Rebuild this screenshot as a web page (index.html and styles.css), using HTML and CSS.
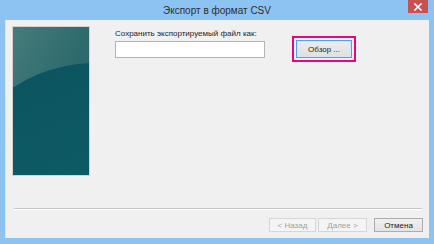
FILE: index.html
```html
<!DOCTYPE html>
<html lang="ru">
<head>
<meta charset="utf-8">
<title>Экспорт в формат CSV</title>
<link rel="stylesheet" href="styles.css">
</head>
<body>
<div class="window">
  <div class="titlebar">
    <span class="title">Экспорт в формат CSV</span>
    <div class="close">
      <svg width="8" height="8" viewBox="0 0 8 8"><path d="M1 1L7 7M7 1L1 7" stroke="#fff" stroke-width="1.6" stroke-linecap="square"/></svg>
    </div>
  </div>
  <div class="client">
    <div class="main">
      <div class="panel">
        <svg width="76" height="148" viewBox="0 0 76 148" preserveAspectRatio="none">
          <defs>
            <linearGradient id="top" x1="0" y1="0" x2="1" y2="1">
              <stop offset="0" stop-color="#467b7b"/>
              <stop offset="0.5" stop-color="#2e6b6d"/>
              <stop offset="1" stop-color="#1f6068"/>
            </linearGradient>
            <linearGradient id="low" x1="0" y1="0" x2="0.4" y2="1">
              <stop offset="0" stop-color="#0b535e"/>
              <stop offset="0.6" stop-color="#0e5c66"/>
              <stop offset="1" stop-color="#196e77"/>
            </linearGradient>
          </defs>
          <rect x="0" y="0" width="76" height="148" fill="url(#top)"/>
          <circle cx="82" cy="186" r="150" fill="url(#low)"/>
        </svg>
      </div>
      <div class="form">
        <div class="label">Сохранить экспортируемый файл как:</div>
        <div class="row">
          <div class="input"></div>
          <div class="btn browse">Обзор ...</div>
        </div>
      </div>
    </div>
    <div class="separator"></div>
    <div class="buttons">
      <div class="btn disabled">&lt; Назад</div>
      <div class="btn disabled next">Далее &gt;</div>
      <div class="btn cancel">Отмена</div>
    </div>
  </div>
</div>
</body>
</html>
```
FILE: styles.css
```css
* { box-sizing: border-box; }
html, body {
  margin: 0;
  padding: 0;
  width: 434px;
  height: 244px;
  overflow: hidden;
}
body {
  background: #8cc3f2;
  font-family: "Liberation Sans", "DejaVu Sans", sans-serif;
}
.window {
  width: 434px;
  height: 244px;
  display: flex;
  flex-direction: column;
}
.titlebar {
  position: relative;
  height: 20px;
  display: flex;
  align-items: center;
  justify-content: center;
}
.title {
  font-size: 10px;
  color: #2e2e2e;
  margin-top: 1px;
}
.close {
  position: absolute;
  top: 0;
  right: 6px;
  width: 20px;
  height: 13px;
  background: #c75050;
  display: flex;
  align-items: center;
  justify-content: center;
}
.client {
  margin: 0 5px 6px 5px;
  height: 218px;
  background: #f0f0f0;
  border-left: 1px solid #d6e6f4;
  display: flex;
  flex-direction: column;
}
.main {
  display: flex;
  padding: 6px 0 0 6px;
  height: 156px;
}
.panel {
  width: 78px;
  height: 150px;
  border: 1px solid #d2d2d2;
  background: #e4e4e4;
}
.panel svg { display: block; }
.form {
  margin-left: 25px;
  padding-top: 2px;
}
.label {
  font-size: 8px;
  line-height: 11px;
  color: #1e1e1e;
  white-space: nowrap;
}
.row {
  display: flex;
  align-items: flex-start;
  margin-top: 2px;
}
.input {
  width: 150px;
  height: 17px;
  background: #fff;
  border: 1px solid #b4b4b4;
}
.btn {
  height: 14px;
  font-size: 8px;
  display: flex;
  align-items: center;
  justify-content: center;
  white-space: nowrap;
}
.browse {
  width: 56px;
  height: 18px;
  margin-left: 31px;
  margin-top: -1px;
  color: #1e1e1e;
  border: 1px solid #4fa3e6;
  background: linear-gradient(#ececec, #e0e0e0);
  box-shadow: inset 0 0 0 1px #cfe6f8;
  outline: 2px solid #e6067f;
  outline-offset: 2px;
}
.separator {
  margin: 32px 7px 0 8px;
  border-top: 1px solid #c6c6c6;
  border-bottom: 1px solid #ffffff;
}
.buttons {
  display: flex;
  justify-content: flex-end;
  margin-top: 8px;
  padding-right: 6px;
}
.disabled {
  width: 47px;
  color: #a2a2a2;
  border: 1px solid #d6d6d6;
  background: #f4f4f4;
}
.next {
  width: 49px;
  margin-left: 2px;
}
.cancel {
  width: 49px;
  margin-left: 7px;
  color: #222;
  border: 1px solid #acacac;
  background: linear-gradient(#f0f0f0, #e3e3e3);
}
```
